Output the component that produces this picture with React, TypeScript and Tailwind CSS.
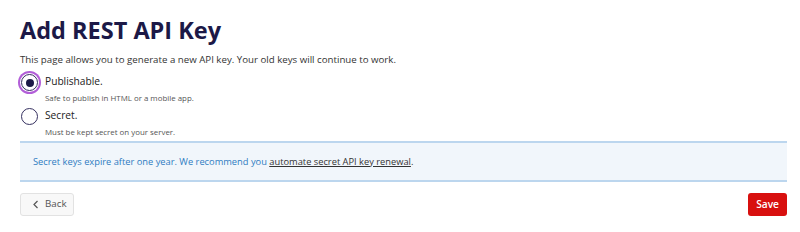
import React, { useState } from 'react';

const font = { fontFamily: '"Open Sans", "Noto Sans", sans-serif' };

function Radio({ checked, focused }: { checked: boolean; focused?: boolean }) {
  return (
    <span
      className={`flex h-[17px] w-[17px] shrink-0 items-center justify-center rounded-full border-[1.5px] border-[#35305f] bg-white ${
        focused ? 'ring-2 ring-[#b25ed8] ring-offset-1' : ''
      }`}
    >
      {checked && <span className="h-[8px] w-[8px] rounded-full bg-[#1c1947]" />}
    </span>
  );
}

export default function App() {
  const [kind, setKind] = useState<'publishable' | 'secret'>('publishable');

  const options = [
    { id: 'publishable' as const, label: 'Publishable.', hint: 'Safe to publish in HTML or a mobile app.' },
    { id: 'secret' as const, label: 'Secret.', hint: 'Must be kept secret on your server.' },
  ];

  return (
    <div className="min-h-screen w-full bg-white pl-[20px] pr-[13px] pt-[13px]" style={font}>
      <h1 className="text-[23.5px] font-bold leading-[34px] text-[#1c1947]">Add REST API Key</h1>
      <p className="mt-[6px] text-[9.7px] leading-[14px] text-[#333]">
        This page allows you to generate a new API key. Your old keys will continue to work.
      </p>

      {/* Key type */}
      <div className="mt-[6px] space-y-[2px]">
        {options.map(o => (
          <label key={o.id} className="flex cursor-pointer gap-[7px] pl-[1px]" onClick={() => setKind(o.id)}>
            <span className="pt-[1px]">
              <Radio checked={kind === o.id} focused={o.id === 'publishable'} />
            </span>
            <span className="flex flex-col">
              <span className="text-[10.2px] leading-[17px] text-[#222]">{o.label}</span>
              <span className="mt-[2px] text-[7.9px] leading-[13px] text-[#555]">{o.hint}</span>
            </span>
          </label>
        ))}
      </div>

      {/* Notice */}
      <div className="mt-[2px] flex h-[41px] items-center border-y-2 border-[#bcd6ee] bg-[#f1f6fb] px-[13px]">
        <p className="text-[9.3px] text-[#2e7cc2]">
          Secret keys expire after one year. We recommend you{' '}
          <a href="#" className="text-[#333] underline">automate secret API key renewal</a>
          <span className="text-[#333]">.</span>
        </p>
      </div>

      {/* Actions */}
      <div className="mt-[11px] flex items-center justify-between">
        <button className="flex h-[23px] items-center gap-[5px] rounded-[3px] border border-[#e2e2e2] bg-[#f8f8f8] pl-[11px] pr-[6px] text-[9.8px] text-[#555]">
          <svg width="8" height="9" viewBox="0 0 8 9" fill="none" stroke="#555" strokeWidth="1.2">
            <path d="M5.5 1 L2 4.5 L5.5 8" />
          </svg>
          Back
        </button>
        <button className="h-[23px] rounded-[3px] bg-[#d8100f] px-[8px] text-[10.2px] font-semibold text-white">
          Save
        </button>
      </div>
    </div>
  );
}
